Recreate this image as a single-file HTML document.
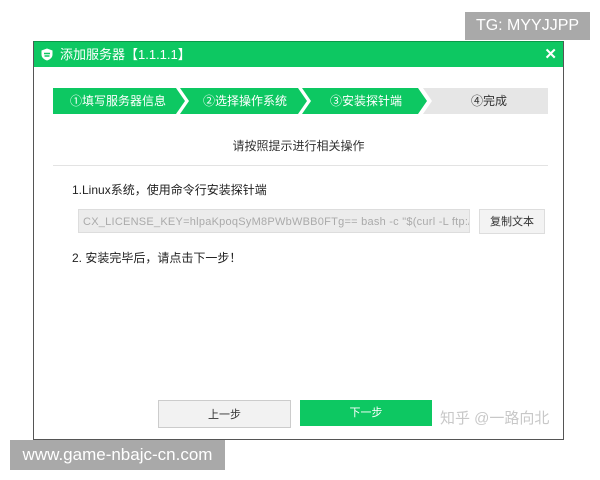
<!DOCTYPE html>
<html><head><meta charset="utf-8"><style>
body{margin:0;width:600px;height:480px;background:#fff;position:relative;overflow:hidden;font-family:"Liberation Sans","Noto Sans CJK SC",sans-serif;}
.a{position:absolute;}
</style></head><body>
<div class="a" style="left:465px;top:12px;width:125px;height:28px;background:#a9a9a9;color:#fff;font-size:16px;line-height:28px;text-align:center;">TG: MYYJJPP</div>
<div class="a" style="left:33px;top:41px;width:529px;height:397px;border:1px solid #555;border-top-color:#0a9a48;background:#fff;"></div>
<div class="a" style="left:34px;top:42px;width:529px;height:25px;background:#0dc862;color:#fff;font-size:13px;line-height:25px;">
<svg style="position:absolute;left:7px;top:6px" width="12" height="13" viewBox="0 0 12 13"><path d="M6 0.5 L11.5 2.5 V6.5 C11.5 9.5 9 11.5 6 12.5 C3 11.5 0.5 9.5 0.5 6.5 V2.5 Z" fill="#fff"/><path d="M3 5.5 H9 M3.5 8 H8.5" stroke="#0dc862" stroke-width="1.4"/></svg>
<span style="position:absolute;left:26px;">添加服务器【1.1.1.1】</span>
<span style="position:absolute;right:6px;top:0;font-size:15px;font-weight:bold;">✕</span></div>
<svg class="a" style="left:0;top:0" width="600" height="480">
<polygon points="53,88 176,88 185,101 176,114 53,114" fill="#0dc862"/>
<polygon points="180,88 298,88 307,101 298,114 180,114 189,101" fill="#0dc862"/>
<polygon points="302,88 418,88 427,101 418,114 302,114 311,101" fill="#0dc862"/>
<polygon points="423,88 548,88 548,114 423,114 432,101" fill="#e6e6e6"/>
<line x1="53" y1="165.5" x2="548" y2="165.5" stroke="#e3e3e3"/>
</svg>
<div class="a" style="left:53px;top:88px;width:130px;line-height:26px;font-size:12px;color:#fff;text-align:center;">①填写服务器信息</div>
<div class="a" style="left:185px;top:88px;width:120px;line-height:26px;font-size:12px;color:#fff;text-align:center;">②选择操作系统</div>
<div class="a" style="left:307px;top:88px;width:118px;line-height:26px;font-size:12px;color:#fff;text-align:center;">③安装探针端</div>
<div class="a" style="left:430px;top:88px;width:118px;line-height:26px;font-size:12px;color:#333;text-align:center;">④完成</div>
<div class="a" style="left:34px;top:137px;width:529px;text-align:center;font-size:12px;color:#333;">请按照提示进行相关操作</div>
<div class="a" style="left:72px;top:181px;font-size:12px;color:#222;">1.Linux系统，使用命令行安装探针端</div>
<div class="a" style="left:78px;top:209px;width:392px;height:24px;border:1px solid #ddd;background:#ececec;color:#aaa;font-size:11px;letter-spacing:0.25px;line-height:24px;overflow:hidden;white-space:nowrap;padding-left:4px;box-sizing:border-box;">CX_LICENSE_KEY=hlpaKpoqSyM8PWbWBB0FTg== bash -c "$(curl -L ftp://file.cloud</div>
<div class="a" style="left:479px;top:209px;width:66px;height:25px;border:1px solid #ddd;background:#f3f3f3;color:#333;font-size:11px;line-height:25px;text-align:center;box-sizing:border-box;">复制文本</div>
<div class="a" style="left:72px;top:249px;font-size:12px;color:#222;">2. 安装完毕后，请点击下一步！</div>
<div class="a" style="left:158px;top:400px;width:133px;height:28px;border:1px solid #ccc;background:#f2f2f2;color:#333;font-size:11px;line-height:28px;text-align:center;box-sizing:border-box;">上一步</div>
<div class="a" style="left:300px;top:400px;width:132px;height:26px;background:#0dc862;color:#fff;font-size:11px;line-height:26px;text-align:center;">下一步</div>
<div class="a" style="left:440px;top:407px;font-size:15px;color:#c8c8c8;">知乎 @一路向北</div>
<div class="a" style="left:10px;top:440px;width:215px;height:30px;background:#a9a9a9;color:#fff;font-size:17px;line-height:30px;text-align:center;">www.game-nbajc-cn.com</div>
</body></html>
